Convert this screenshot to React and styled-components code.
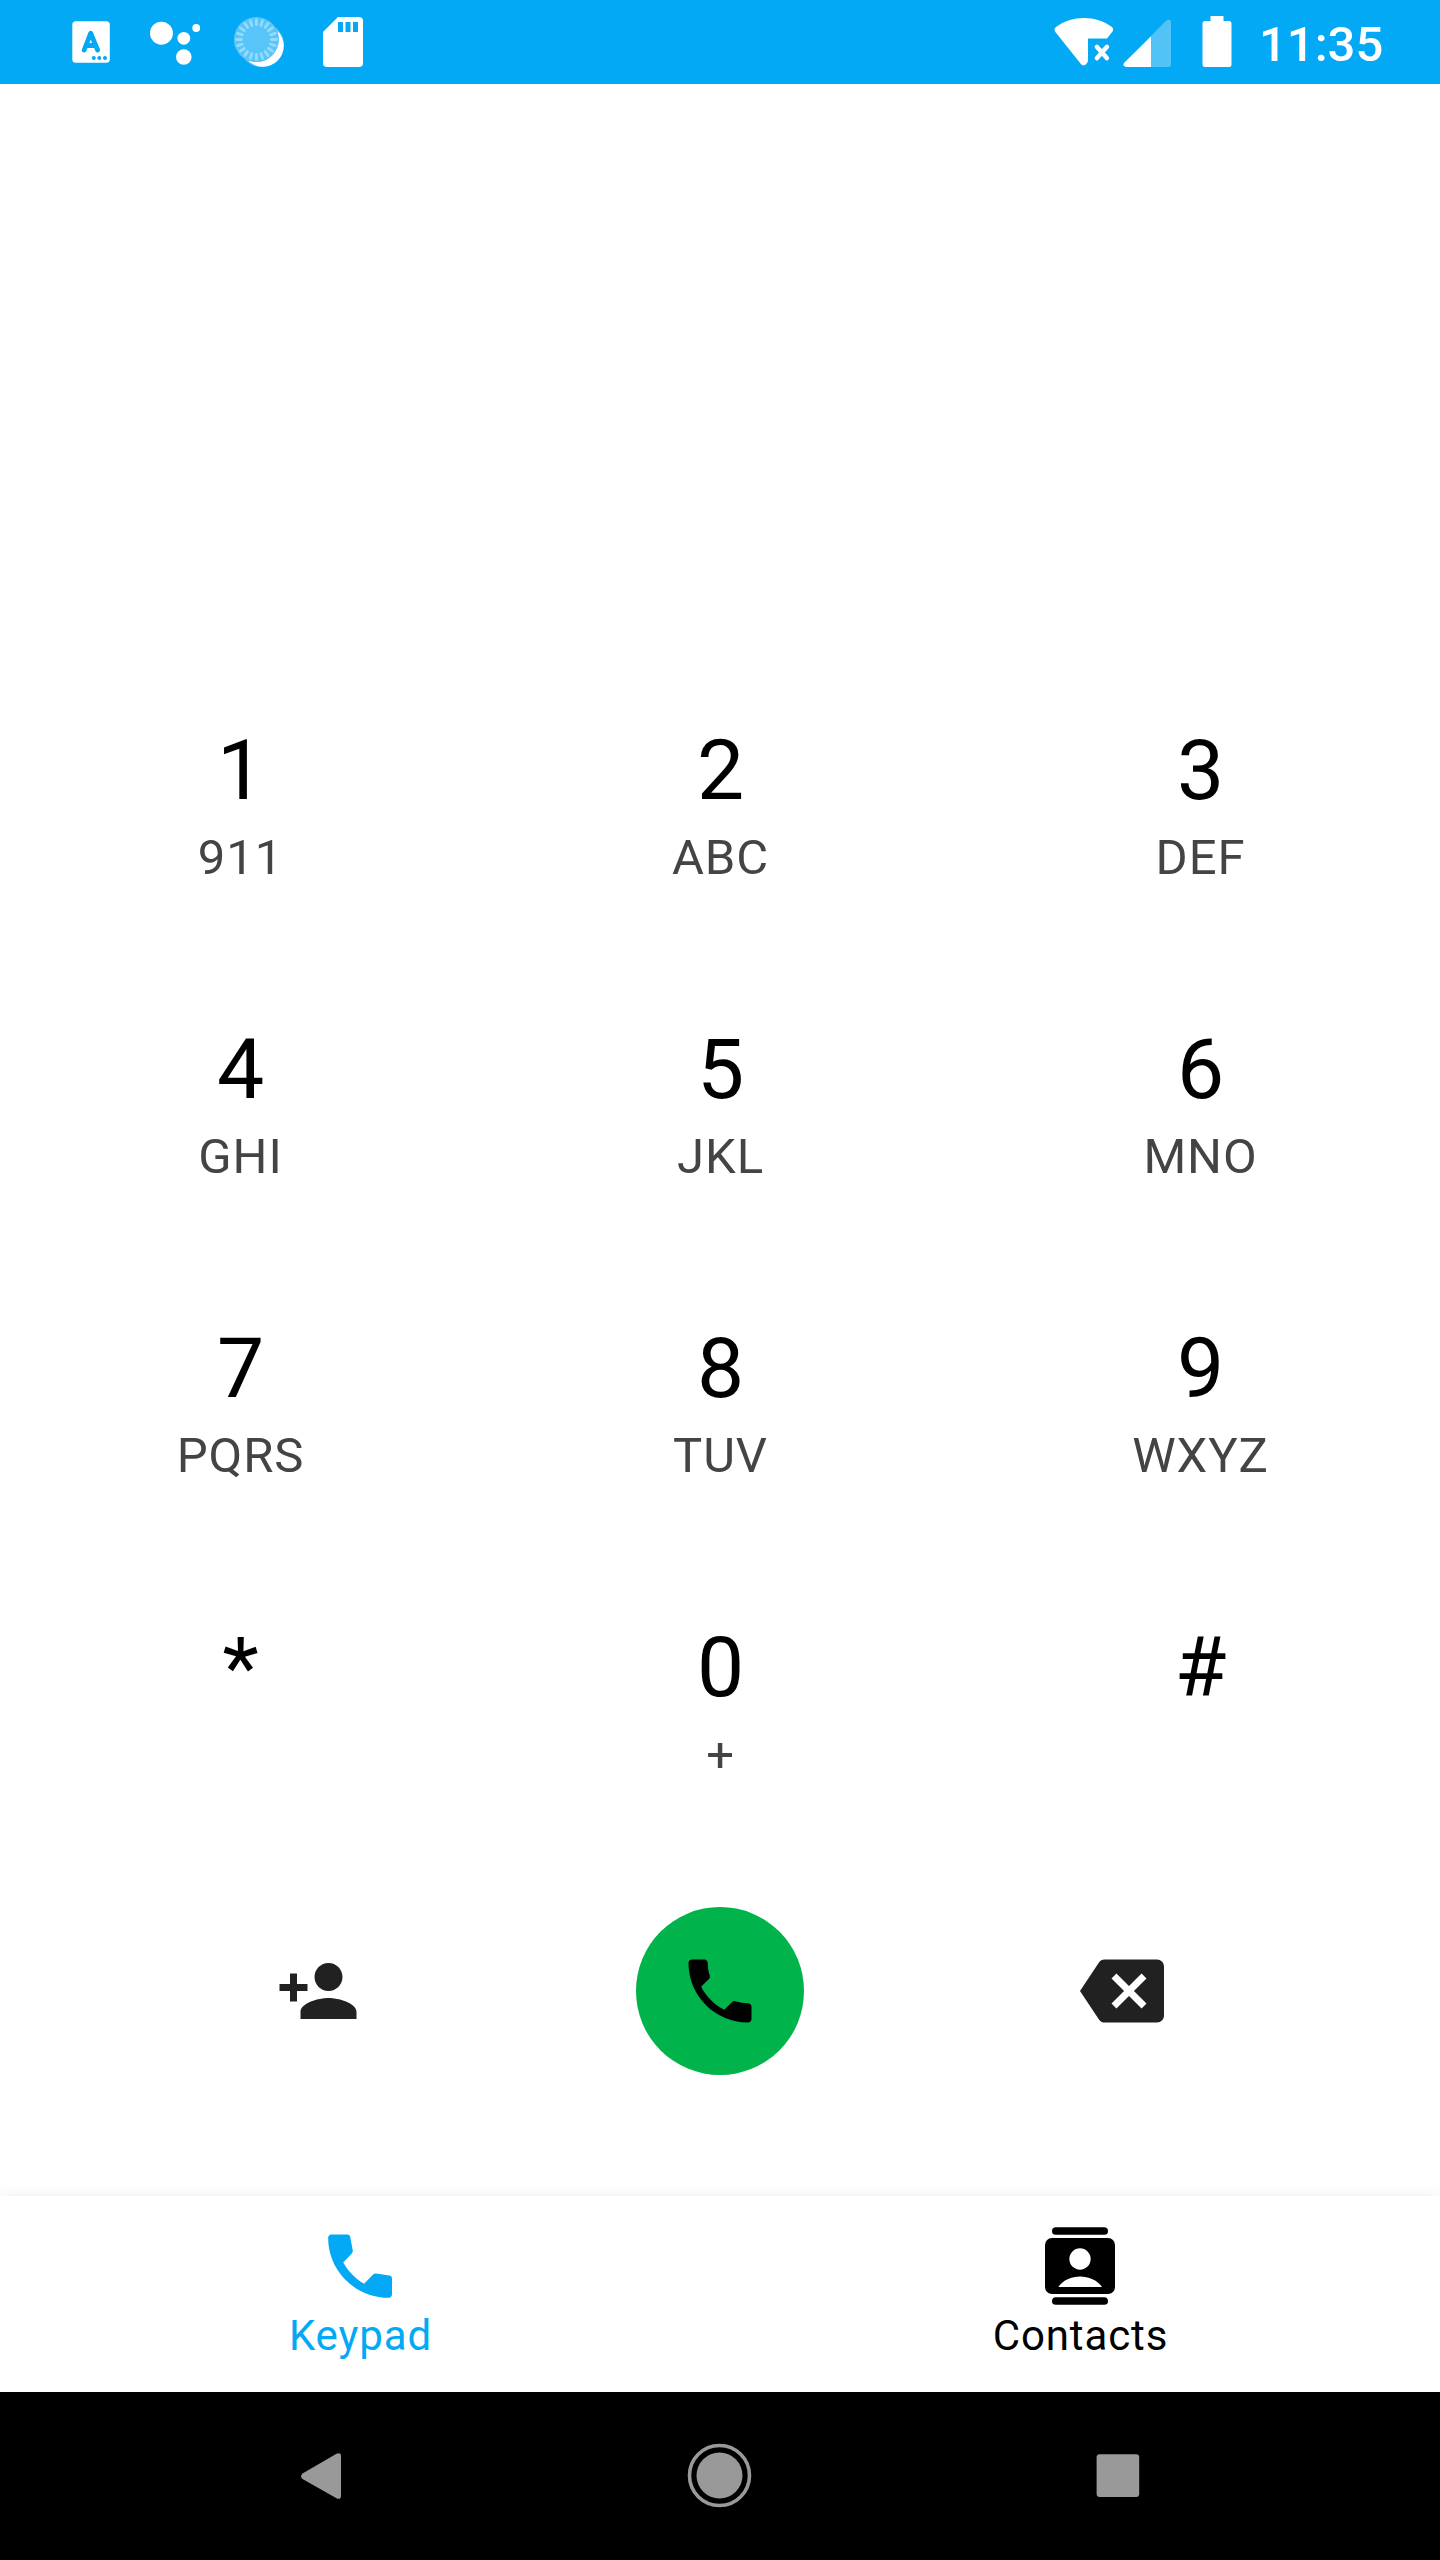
import React from "react";
import styled, { createGlobalStyle } from "styled-components";

const ACCENT = "#03a9f4";

const GlobalStyle = createGlobalStyle`
  * { box-sizing: border-box; }
  body { margin: 0; background: #fff; }
`;

const Screen = styled.div`
  display: flex;
  flex-direction: column;
  width: 1440px;
  height: 2560px;
  background: #fff;
  font-family: Roboto, "Liberation Sans", sans-serif;
  color: #000;
`;

const StatusBar = styled.header`
  flex: none;
  display: flex;
  justify-content: space-between;
  height: 84px;
  padding: 0 57px 0 72px;
  background: ${ACCENT};
  color: #fff;
`;

const StatusGroup = styled.div`
  display: flex;
  height: 84px;
`;

const StatusIcon = styled.svg`
  display: block;
  flex: none;
  width: ${(p) => p.$width}px;
  height: 84px;
  margin-right: ${(p) => p.$gap || 0}px;
  fill: #fff;
`;

const Clock = styled.time`
  width: 124px;
  font-size: 49px;
  font-weight: 500;
  line-height: 89px;
  white-space: nowrap;
`;

const NumberDisplay = styled.div`
  flex: none;
  height: 571px;
`;

const KeyGrid = styled.main`
  flex: none;
  display: grid;
  grid-template-columns: repeat(3, 1fr);
  grid-auto-rows: 299px;
`;

const Key = styled.button`
  display: flex;
  flex-direction: column;
  align-items: center;
  gap: 9px;
  padding: 67px 0;
  border: 0;
  background: none;
  font-family: inherit;
`;

const Digit = styled.span`
  height: 98px;
  padding-left: 1px;
  font-size: 84px;
  line-height: 98px;
  color: #000;
`;

const Letters = styled.span`
  height: 58px;
  padding-left: 1px;
  font-size: 49px;
  line-height: 58px;
  letter-spacing: 0.9px;
  color: #444;
`;

const Actions = styled.div`
  flex: none;
  display: flex;
  justify-content: space-evenly;
  align-items: center;
  height: 345px;
  padding: 56px 0 121px;
`;

const ActionButton = styled.button`
  display: flex;
  padding: 0;
  border: 0;
  background: none;
  color: #212121;
`;

const CallButton = styled(ActionButton)`
  align-items: center;
  justify-content: center;
  width: 168px;
  height: 168px;
  border-radius: 50%;
  background: #00b34a;
  color: #000;
`;

const Glyph = styled.svg`
  display: block;
  width: 84px;
  height: 84px;
  fill: currentColor;
`;

const TabBar = styled.nav`
  flex: none;
  display: grid;
  grid-template-columns: 1fr 1fr;
  height: 196px;
  background: #fff;
  box-shadow: 0 0 14px rgba(0, 0, 0, 0.08);
`;

const Tab = styled.button`
  display: flex;
  flex-direction: column;
  align-items: center;
  padding: 28px 0 0;
  border: 0;
  background: none;
  font-family: inherit;
  color: ${(p) => (p.$active ? ACCENT : "#000")};
`;

const TabLabel = styled.span`
  margin-top: 3px;
  padding-left: 1px;
  font-size: 42px;
  line-height: 50px;
  letter-spacing: 0.9px;
`;

const SystemBar = styled.footer`
  flex: none;
  display: flex;
  justify-content: space-between;
  height: 168px;
  padding: 0 280px 0 279px;
  background: #000;
`;

const SystemIcon = styled.svg`
  display: block;
  width: 84px;
  height: 168px;
  fill: #999;
`;

const KEYS = [
  ["1", "911"], ["2", "ABC"], ["3", "DEF"],
  ["4", "GHI"], ["5", "JKL"], ["6", "MNO"],
  ["7", "PQRS"], ["8", "TUV"], ["9", "WXYZ"],
  ["*", ""], ["0", "+"], ["#", ""],
];

const RAYS = Array.from({ length: 20 }, (_, i) => i * 18);

export default function App() {
  return (
    <>
      <GlobalStyle />
      <Screen>
        <StatusBar>
          <StatusGroup>
            <StatusIcon $width={38} $gap={40} viewBox="0 0 38 84">
              <rect x="0.3" y="21.3" width="37.5" height="41.5" rx="3.5" />
              <path d="M12.2 50 L18.7 33.2 L25.6 50 M14 45.5 H23.5" fill="none" stroke={ACCENT} strokeWidth="4.8" strokeLinecap="round" strokeLinejoin="round" />
              <g fill={ACCENT}>
                <circle cx="21.8" cy="58" r="2" />
                <circle cx="27.3" cy="58" r="2" />
                <circle cx="33" cy="58" r="2" />
              </g>
            </StatusIcon>
            <StatusIcon $width={50} $gap={34} viewBox="0 0 50 84">
              <circle cx="11.4" cy="33.2" r="11.5" />
              <circle cx="33.8" cy="38.3" r="6.4" />
              <circle cx="46.2" cy="28" r="3.9" />
              <circle cx="33.8" cy="57" r="7.8" />
            </StatusIcon>
            <StatusIcon $width={50} $gap={39} viewBox="0 0 50 84">
              <circle cx="27.6" cy="44.8" r="22.3" fillOpacity="0.34" />
              <path d="M43.5 31 A20.6 20.6 0 0 1 14.3 60.8 Q32 65.5 40.5 52 Q46.5 42.5 43.5 31z" />
              <circle cx="22.4" cy="39.5" r="22.5" fill="#58c5f9" />
              <g stroke="#94dafb" strokeWidth="2.8" strokeLinecap="round">
                {RAYS.map((angle) => (
                  <line key={angle} x1="22.4" y1="19.6" x2="22.4" y2="24.6" transform={`rotate(${angle} 22.4 39.5)`} />
                ))}
              </g>
            </StatusIcon>
            <StatusIcon $width={40} viewBox="0 0 40 84">
              <path d="M15 17 H36 a4 4 0 0 1 4 4 V63 a4 4 0 0 1 -4 4 H4 a4 4 0 0 1 -4 -4 V32z" />
              <path d="M15 22h5v10h-5z M22.5 22h5v10h-5z M30 22h5v10h-5z" fill={ACCENT} />
            </StatusIcon>
          </StatusGroup>
          <StatusGroup>
            <StatusIcon $width={60} $gap={9} viewBox="0 0 60 84">
              <path d="M2 27 C18 15 42 15 58 27 Q60 29 58.5 31.5 L53 38.5 H34 V61 Q32 66 29 65.3 Q27.5 65 26.5 63.5 L1.2 31.8 Q-0.5 29 2 27z" />
              <path d="M42.8 46.8 L53 58.2 M53 46.8 L42.8 58.2" fill="none" stroke="#fff" strokeWidth="4.4" strokeLinecap="round" />
            </StatusIcon>
            <StatusIcon $width={48} $gap={31} viewBox="0 0 48 84">
              <path d="M1 63.2 L43 20.8 Q47.5 18 48 22 V64 Q48 67 45 67 H28z" fillOpacity="0.31" />
              <path d="M28 36.5 V67 H3 Q-1 66 1 63z" />
            </StatusIcon>
            <StatusIcon $width={30} $gap={27} viewBox="0 0 30 84">
              <path d="M8.5 16 H21.5 V21 H27 Q29.5 21 29.5 23.5 V64.5 Q29.5 67 27 67 H3 Q.5 67 .5 64.5 V23.5 Q.5 21 3 21 H8.5z" />
            </StatusIcon>
            <Clock>11:35</Clock>
          </StatusGroup>
        </StatusBar>

        <NumberDisplay />

        <KeyGrid>
          {KEYS.map(([digit, letters]) => (
            <Key key={digit}>
              <Digit>{digit}</Digit>
              <Letters>{letters}</Letters>
            </Key>
          ))}
        </KeyGrid>

        <Actions>
          <ActionButton aria-label="Add contact">
            <Glyph viewBox="0 0 24 24">
              <path d="M15 12c2.21 0 4-1.79 4-4s-1.79-4-4-4-4 1.79-4 4 1.79 4 4 4zm-9-2V7H4v3H1v2h3v3h2v-3h3v-2H6zm9 4c-2.67 0-8 1.34-8 4v2h16v-2c0-2.66-5.33-4-8-4z" />
            </Glyph>
          </ActionButton>
          <CallButton aria-label="Call">
            <Glyph viewBox="0 0 24 24">
              <path d="M6.62 10.79c1.44 2.83 3.76 5.14 6.59 6.59l2.2-2.2c.27-.27.67-.36 1.02-.24 1.12.37 2.33.57 3.57.57.55 0 1 .45 1 1V20c0 .55-.45 1-1 1-9.39 0-17-7.61-17-17 0-.55.45-1 1-1h3.5c.55 0 1 .45 1 1 0 1.25.2 2.45.57 3.57.11.35.03.74-.25 1.02l-2.2 2.2z" />
            </Glyph>
          </CallButton>
          <ActionButton aria-label="Delete">
            <Glyph viewBox="0 0 24 24">
              <path d="M22 3H7c-.69 0-1.23.35-1.59.88L0 12l5.41 8.11c.36.53.9.89 1.59.89h15c1.1 0 2-.9 2-2V5c0-1.1-.9-2-2-2zm-3 12.59L17.59 17 14 13.41 10.41 17 9 15.59 12.59 12 9 8.41 10.41 7 14 10.59 17.59 7 19 8.41 15.41 12 19 15.59z" />
            </Glyph>
          </ActionButton>
        </Actions>

        <TabBar>
          <Tab $active>
            <Glyph viewBox="0 0 24 24">
              <path d="M2.9 3.95c0-.55.4-.95.95-.95h4.5c.5 0 .8.3.88.8l.7 3.75c.05.35-.02.6-.27.85L7.2 10.98c1.5 2.62 3.37 4.5 5.95 6.07l2.6-2.6c.25-.25.5-.33.85-.28l3.75.55c.5.07.8.4.8.88v4.5c0 .55-.4 1-.95 1-9.55 0-17.3-7.7-17.3-17.15z" />
            </Glyph>
            <TabLabel>Keypad</TabLabel>
          </Tab>
          <Tab>
            <Glyph viewBox="0 0 24 24">
              <rect x="4" y="0.9" width="16" height="2.2" rx="1.1" />
              <rect x="4" y="20.9" width="16" height="2.2" rx="1.1" />
              <rect x="2" y="4" width="20" height="16" rx="2" />
              <g fill="#fff">
                <circle cx="12" cy="10" r="3.05" />
                <path d="M5.8 18 C8.5 14 15.5 14 18.3 18z" />
              </g>
            </Glyph>
            <TabLabel>Contacts</TabLabel>
          </Tab>
        </TabBar>

        <SystemBar>
          <SystemIcon viewBox="0 0 84 168">
            <path d="M23.5 81.5 L57.5 61.8 Q62 60 62 64 V104 Q62 108 57.5 106.3 L23.5 87 Q20.5 84.3 23.5 81.5z" />
          </SystemIcon>
          <SystemIcon viewBox="0 0 84 168">
            <circle cx="41.5" cy="83.5" r="30" fill="none" stroke="#999" strokeWidth="3.6" />
            <circle cx="41.5" cy="83.5" r="23" />
          </SystemIcon>
          <SystemIcon viewBox="0 0 84 168">
            <rect x="20.6" y="62.3" width="42.6" height="42.6" rx="3" />
          </SystemIcon>
        </SystemBar>
      </Screen>
    </>
  );
}
